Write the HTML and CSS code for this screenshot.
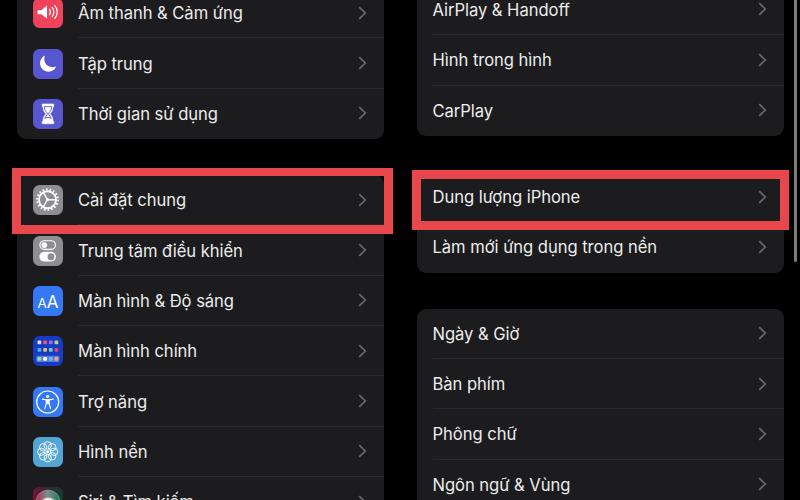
FILE: index.html
```html
<!DOCTYPE html>
<html lang="vi">
<head>
  <meta charset="UTF-8">
  <meta name="viewport" content="width=device-width, initial-scale=1.0">
  <title>Cài đặt</title>
  <link rel="stylesheet" href="styles.css">
</head>
<body>
  <!-- Shared chevron -->
  <svg class="defs">
    <symbol id="chevron" viewBox="0 0 9 14">
      <path d="M1.2 1.2 L7.3 7 L1.2 12.8" fill="none" stroke="#68686b" stroke-width="1.7"/>
    </symbol>
  </svg>

  <!-- Settings -->
  <div class="screen settings">
    <div class="group">
      <div class="row">
        <svg class="icon red" viewBox="0 0 30 30">
          <path d="M5.2 12.2h3.2l5-4.2q.6-.4.6.4v11.4q0 .8-.6.4l-5-4H5.2q-.6 0-.6-.7v-2.6q0-.7.6-.7z" fill="#fff"/>
          <path d="M16.5 11.3q2 2.7 0 5.4M19.2 9.4q3.3 4.6 0 9.2M21.9 7.6q4.7 6.4 0 12.8" fill="none" stroke="#fff" stroke-width="1.2" stroke-linecap="round"/>
        </svg>
        <div class="label"><span>Âm thanh &amp; Cảm ứng</span><svg class="chevron"><use href="#chevron"/></svg></div>
      </div>
      <div class="row">
        <svg class="icon purple" viewBox="0 0 30 30">
          <path d="M12 6.6C9.1 7.9 7 10.8 7 14.2C7 19 10.8 22.7 15.4 22.7C18.9 22.7 21.9 20.7 23.2 17.5C22.2 18 21 18.2 19.8 18.2C14.9 18.2 11.3 14.8 11.3 10C11.3 8.8 11.5 7.6 12 6.6Z" fill="#fff"/>
        </svg>
        <div class="label"><span>Tập trung</span><svg class="chevron"><use href="#chevron"/></svg></div>
      </div>
      <div class="row">
        <svg class="icon purple" viewBox="0 0 30 30">
          <path d="M9.2 5h11.6v2.5h-.9c0 4.2-1 5.500-3 7.300 2 2 3 3.300 3 7.400h.9v2.500H9.200v-2.500h.9c0-4.100 1-5.400 3-7.400-2-1.800-3-3.100-3-7.300h-.9z" fill="#fff" stroke="#fff" stroke-width=".6" stroke-linejoin="round"/>
          <path d="M11.4 7.6h7.2c-.2 3.500-1.200 4.800-2.900 6.500v1.600c1.200 1 2.100 2 2.500 3.500L15 18.300l-3.200.9c.4-1.500 1.300-2.500 2.500-3.500v-1.600c-1.700-1.700-2.700-3-2.900-6.500z" fill="none" stroke="#5856ce" stroke-width=".9"/>
        </svg>
        <div class="label"><span>Thời gian sử dụng</span><svg class="chevron"><use href="#chevron"/></svg></div>
      </div>
    </div>

    <div class="group">
      <div class="row">
        <svg class="icon gray" viewBox="0 0 30 30">
          <circle cx="14.5" cy="14.7" r="10.3" fill="none" stroke="#fff" stroke-width="2.2" stroke-dasharray="1.6 1.996"/>
          <circle cx="14.5" cy="14.7" r="8.5" fill="none" stroke="#fff" stroke-width="1.9"/>
          <path d="M14.5 14.7H23M14.5 14.7L10.3 7.4M14.5 14.7L10.3 22" stroke="#fff" stroke-width="1.4"/>
          <circle cx="14.5" cy="14.7" r="1.6" fill="#fff"/>
        </svg>
        <div class="label"><span>Cài đặt chung</span><svg class="chevron"><use href="#chevron"/></svg></div>
      </div>
      <div class="row">
        <svg class="icon gray" viewBox="0 0 30 30">
          <rect x="6.9" y="4.7" width="15.5" height="8.7" rx="4.35" fill="none" stroke="#fff" stroke-width="1.1"/>
          <circle cx="11.3" cy="9.1" r="2.9" fill="#fff"/>
          <rect x="6.4" y="15.8" width="16.5" height="9.8" rx="4.9" fill="#fff"/>
          <circle cx="18" cy="20.7" r="3.5" fill="#8e8e92"/>
        </svg>
        <div class="label"><span>Trung tâm điều khiển</span><svg class="chevron"><use href="#chevron"/></svg></div>
      </div>
      <div class="row">
        <svg class="icon blue" viewBox="0 0 30 30">
          <text class="aa" x="4.4" y="21.5" font-size="13.5">A</text>
          <text class="aa" x="13.7" y="21.5" font-size="17">A</text>
        </svg>
        <div class="label"><span>Màn hình &amp; Độ sáng</span><svg class="chevron"><use href="#chevron"/></svg></div>
      </div>
      <div class="row">
        <svg class="icon navy" viewBox="0 0 30 30">
          <rect x="3.3" y="19.7" width="23" height="6.2" rx="1.5" fill="#5879dd"/>
          <g>
            <rect x="4.5" y="4.5" width="3.8" height="3.8" rx="1" fill="#dcdcf2"/>
            <rect x="10.2" y="4.5" width="3.8" height="3.8" rx="1" fill="#e4587c"/>
            <rect x="15.9" y="4.5" width="3.8" height="3.8" rx="1" fill="#a565ee"/>
            <rect x="21.5" y="4.5" width="3.8" height="3.8" rx="1" fill="#bdd572"/>
            <rect x="4.5" y="11.9" width="3.8" height="3.8" rx="1" fill="#50aef5"/>
            <rect x="10.2" y="11.9" width="3.8" height="3.8" rx="1" fill="#e8b976"/>
            <rect x="15.9" y="11.9" width="3.8" height="3.8" rx="1" fill="#60cfd6"/>
            <rect x="21.5" y="11.9" width="3.8" height="3.8" rx="1" fill="#df4862"/>
            <rect x="4.5" y="20.9" width="3.8" height="3.8" rx="1" fill="#8de0a0"/>
            <rect x="10.2" y="20.9" width="3.8" height="3.8" rx="1" fill="#fff"/>
            <rect x="15.9" y="20.9" width="3.8" height="3.8" rx="1" fill="#63b9fa"/>
            <rect x="21.5" y="20.9" width="3.8" height="3.8" rx="1" fill="#eda766"/>
          </g>
        </svg>
        <div class="label"><span>Màn hình chính</span><svg class="chevron"><use href="#chevron"/></svg></div>
      </div>
      <div class="row">
        <svg class="icon blue" viewBox="0 0 30 30">
          <circle cx="14.7" cy="15" r="11" fill="none" stroke="#fff" stroke-width="1.2"/>
          <circle cx="14.7" cy="9.3" r="1.6" fill="#fff"/>
          <path d="M9.3 12.1l4 .7h2.8l4-.7" fill="none" stroke="#fff" stroke-width="1.2" stroke-linecap="round"/>
          <path d="M16.2 12.5v4.2l1.4 5.100M13.200 12.500v4.200l-1.400 5.100" fill="none" stroke="#fff" stroke-width="1.1" stroke-linecap="round"/>
          <path d="M13.2 12.5h3v4.700h-3z" fill="#fff"/>
        </svg>
        <div class="label"><span>Trợ năng</span><svg class="chevron"><use href="#chevron"/></svg></div>
      </div>
      <div class="row">
        <svg class="icon sky" viewBox="0 0 30 30">
          <g fill="none" stroke="#fff" stroke-width=".9">
            <circle cx="14.7" cy="8.4" r="3.7"/>
            <circle cx="19.2" cy="10.3" r="3.7"/>
            <circle cx="21.1" cy="14.8" r="3.7"/>
            <circle cx="19.2" cy="19.3" r="3.7"/>
            <circle cx="14.7" cy="21.2" r="3.7"/>
            <circle cx="10.2" cy="19.3" r="3.7"/>
            <circle cx="8.3" cy="14.8" r="3.7"/>
            <circle cx="10.2" cy="10.3" r="3.7"/>
          </g>
          <circle cx="14.7" cy="14.8" r="1.6" fill="#fff"/>
        </svg>
        <div class="label"><span>Hình nền</span><svg class="chevron"><use href="#chevron"/></svg></div>
      </div>
      <div class="row">
        <svg class="icon siri" viewBox="0 0 30 30">
          <defs>
            <linearGradient id="siri-bg">
              <stop offset="0" stop-color="#7c1235"/>
              <stop offset=".4" stop-color="#3c2330"/>
              <stop offset="1" stop-color="#123e31"/>
            </linearGradient>
            <linearGradient id="siri-orb">
              <stop offset="0" stop-color="#b52a55"/>
              <stop offset=".48" stop-color="#7d8f88"/>
              <stop offset="1" stop-color="#237a5c"/>
            </linearGradient>
          </defs>
          <rect width="30" height="30" fill="url(#siri-bg)"/>
          <circle cx="15" cy="15" r="12" fill="url(#siri-orb)" stroke="#79a392" stroke-width=".7"/>
          <path d="M9 13q6-5 13 0-5-1-7 2z" fill="#fff" opacity=".8"/>
        </svg>
        <div class="label"><span>Siri &amp; Tìm kiếm</span><svg class="chevron"><use href="#chevron"/></svg></div>
      </div>
    </div>
    <div class="highlight"></div>
  </div>

  <!-- General -->
  <div class="screen general">
    <div class="group">
      <div class="row"><div class="label"><span>AirPlay &amp; Handoff</span><svg class="chevron"><use href="#chevron"/></svg></div></div>
      <div class="row"><div class="label"><span>Hình trong hình</span><svg class="chevron"><use href="#chevron"/></svg></div></div>
      <div class="row"><div class="label"><span>CarPlay</span><svg class="chevron"><use href="#chevron"/></svg></div></div>
    </div>
    <div class="group">
      <div class="row"><div class="label"><span>Dung lượng iPhone</span><svg class="chevron"><use href="#chevron"/></svg></div></div>
      <div class="row"><div class="label"><span>Làm mới ứng dụng trong nền</span><svg class="chevron"><use href="#chevron"/></svg></div></div>
    </div>
    <div class="group">
      <div class="row"><div class="label"><span>Ngày &amp; Giờ</span><svg class="chevron"><use href="#chevron"/></svg></div></div>
      <div class="row"><div class="label"><span>Bàn phím</span><svg class="chevron"><use href="#chevron"/></svg></div></div>
      <div class="row"><div class="label"><span>Phông chữ</span><svg class="chevron"><use href="#chevron"/></svg></div></div>
      <div class="row"><div class="label"><span>Ngôn ngữ &amp; Vùng</span><svg class="chevron"><use href="#chevron"/></svg></div></div>
    </div>
    <div class="highlight"></div>
    <div class="scrollbar"></div>
  </div>
</body>
</html>
```
FILE: styles.css
```css
* {
  box-sizing: border-box;
}
body {
  margin: 0;
  display: flex;
  width: 800px;
  height: 500px;
  overflow: hidden;
  background-color: #000;
  color: #ececec;
  font-family: Inter, "Liberation Sans", sans-serif;
  font-size: 16.6px;
  letter-spacing: -0.05px;
}
.defs {
  display: none;
}
.screen {
  position: relative;
  width: 400px;
  height: 500px;
  overflow: hidden;
  display: flex;
  flex-direction: column;
  gap: 36px;
  padding: 0 16.5px;
}
.group {
  flex-shrink: 0;
  background-color: #1c1c1e;
  border-radius: 9px;
  overflow: hidden;
}
/* lists are scrolled past the top edge */
.settings .group:first-child {
  margin-top: -12px;
}
.general .group:first-child {
  margin-top: -15.2px;
}
.row {
  display: flex;
  align-items: center;
  height: 50.35px;
  padding-left: 16px;
}
.label {
  flex: 1;
  height: 100%;
  display: flex;
  align-items: center;
  justify-content: space-between;
  padding-right: 16.5px;
  border-bottom: 1px solid #2a2a2c;
  white-space: nowrap;
}
.label span {
  padding-top: 1px;
}
.row:last-child .label {
  border-bottom-color: transparent;
}
.icon {
  width: 30px;
  height: 30px;
  border-radius: 6.5px;
  margin-right: 15.5px;
}
.chevron {
  width: 9px;
  height: 14px;
}
.red {
  background-color: #ee435b;
}
.purple {
  background-color: #5856ce;
}
.gray {
  background-color: #8e8e92;
}
.blue {
  background-color: #3478f6;
}
.navy {
  background-color: #173bc4;
}
.sky {
  background-color: #54a5d6;
}
.aa {
  fill: #fff;
  letter-spacing: 0;
}
.highlight {
  position: absolute;
  border: 9px solid #e8474c;
}
.settings .highlight {
  left: 12px;
  top: 168px;
  width: 381px;
  height: 66px;
  border-top-width: 8px;
}
.general .highlight {
  left: 12px;
  top: 170px;
  width: 376.5px;
  height: 60px;
}
.scrollbar {
  position: absolute;
  left: 394px;
  top: -20px;
  width: 3px;
  height: 282px;
  border-radius: 2px;
  background-color: #7c7c7c;
}
```
